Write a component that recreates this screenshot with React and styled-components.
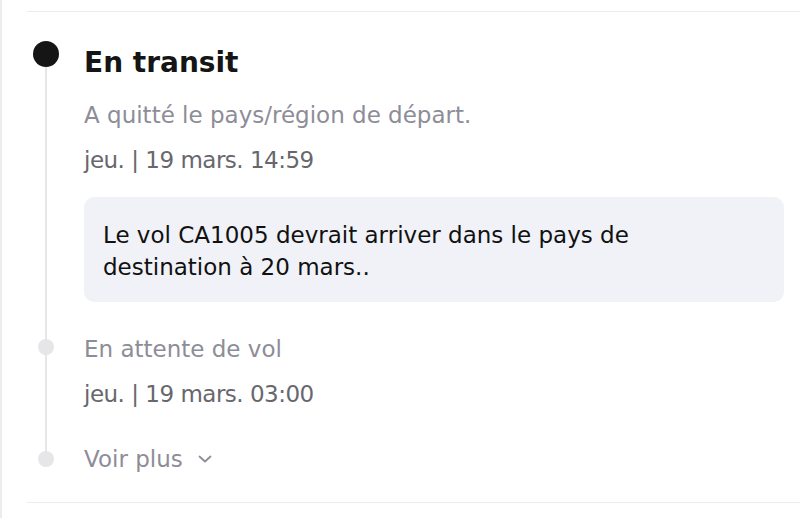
import React from "react";
import styled, { createGlobalStyle } from "styled-components";

const Global = createGlobalStyle`
  html, body { margin: 0; padding: 0; background: #fff; }
  body { font-family: "DejaVu Sans", "Noto Sans", sans-serif; }
`;

const Frame = styled.div`
  width: 800px;
  height: 518px;
  box-sizing: border-box;
  border-left: 2px solid #ececee;
  padding: 11px 0 0 25px;
  overflow: hidden;
`;

const Section = styled.section`
  border-top: 1px solid #ececee;
  border-bottom: 1px solid #ececee;
  padding: 33px 16px 28px 0;
`;

const Timeline = styled.ol`
  list-style: none;
  margin: 0;
  padding: 0;
  position: relative;
  &::before {
    content: "";
    position: absolute;
    left: 18px;
    top: 10px;
    bottom: 15px;
    width: 2px;
    background: #e6e6e8;
  }
`;

const Item = styled.li`
  display: grid;
  grid-template-columns: 57px 1fr;
  margin-top: ${(p) => p.$gap || 0}px;
`;

const Marker = styled.div`
  width: 38px;
  height: ${(p) => (p.$big ? 18 : 30)}px;
  display: flex;
  justify-content: center;
  align-items: ${(p) => (p.$big ? "flex-start" : "center")};
  margin-top: ${(p) => (p.$big ? -4 : p.$lift || 0)}px;
  position: relative;
  z-index: 1;
`;

const Dot = styled.span`
  display: block;
  flex: none;
  width: ${(p) => (p.$big ? 26 : 16)}px;
  height: ${(p) => (p.$big ? 26 : 16)}px;
  border-radius: 50%;
  background: ${(p) => (p.$big ? "#151515" : "#e6e6e8")};
`;

const Content = styled.div`
  display: flex;
  flex-direction: column;
  align-items: flex-start;
  min-width: 0;
`;

const Title = styled.h2`
  margin: 0;
  font-size: 28px;
  line-height: 36px;
  font-weight: 700;
  color: #151515;
`;

const Status = styled.div`
  font-size: 23px;
  line-height: 30px;
  color: ${(p) => (p.$muted ? "#8d8d98" : "#67676d")};
  letter-spacing: ${(p) => (p.$muted ? 0 : -0.5)}px;
  margin-top: ${(p) => p.$mt || 0}px;
  white-space: nowrap;
`;

const Note = styled.div`
  align-self: stretch;
  margin-top: 22px;
  background: #f0f2f7;
  border-radius: 10px;
  padding: 22px 19px 19px;
  font-size: 23px;
  line-height: 32px;
  color: #111;
`;

const More = styled.button`
  all: unset;
  cursor: pointer;
  display: inline-flex;
  align-items: center;
  gap: 15px;
  font-family: inherit;
  font-size: 23px;
  line-height: 30px;
  color: #8d8d98;
`;

const Chevron = () => (
  <svg width="14" height="10" viewBox="0 0 14 10" fill="none">
    <path d="M1.5 2.5L7 7.5l5.5-5" stroke="#8d8d98" strokeWidth="1.8" strokeLinecap="round" strokeLinejoin="round" />
  </svg>
);

export default function App() {
  return (
    <>
      <Global />
      <Frame>
        <Section>
          <Timeline>
            <Item>
              <Marker $big>
                <Dot $big />
              </Marker>
              <Content>
                <Title>En transit</Title>
                <Status $muted $mt={19}>A quitté le pays/région de départ.</Status>
                <Status $mt={15}>jeu. | 19 mars. 14:59</Status>
                <Note>
                  Le vol CA1005 devrait arriver dans le pays de
                  <br />
                  destination à 20 mars..
                </Note>
              </Content>
            </Item>
            <Item $gap={32}>
              <Marker $lift={-2}>
                <Dot />
              </Marker>
              <Content>
                <Status $muted>En attente de vol</Status>
                <Status $mt={15}>jeu. | 19 mars. 03:00</Status>
              </Content>
            </Item>
            <Item $gap={35}>
              <Marker>
                <Dot />
              </Marker>
              <Content>
                <More>
                  Voir plus
                  <Chevron />
                </More>
              </Content>
            </Item>
          </Timeline>
        </Section>
      </Frame>
    </>
  );
}
